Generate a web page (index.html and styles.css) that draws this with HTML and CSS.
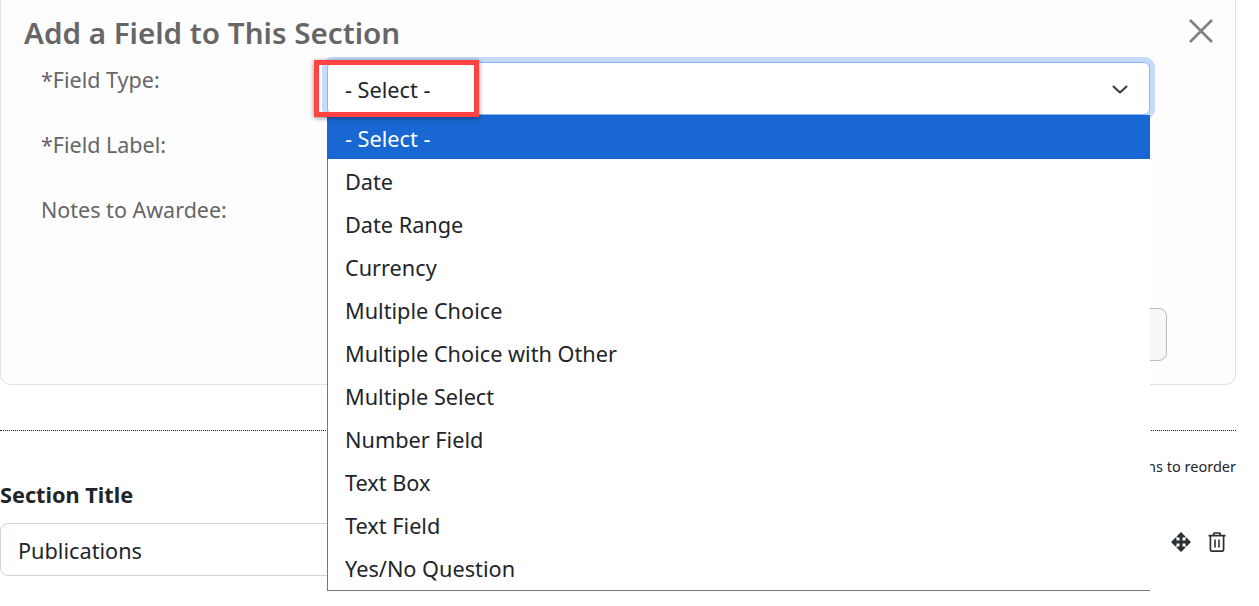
FILE: index.html
```html
<!DOCTYPE html>
<html lang="en">
<head>
    <meta charset="UTF-8">
    <meta name="viewport" content="width=device-width, initial-scale=1.0">
    <title>Add a Field</title>
    <link rel="stylesheet" href="styles.css">
</head>
<body>
    <div class="page">
        <div class="add-card">
            <div class="add-head">
                <h2>Add a Field to This Section</h2>
                <button class="close-btn" aria-label="Close">
                    <svg width="26" height="26" viewBox="0 0 26 26"><path d="M2 2 L24 24 M24 2 L2 24" stroke="#808080" stroke-width="2.6" fill="none"/></svg>
                </button>
            </div>
            <div class="field-row">
                <label>*Field Type:</label>
                <div class="select-wrap">
                    <div class="select-box">
                        <span>- Select -</span>
                        <svg width="16" height="16" viewBox="0 0 16 16"><path d="M1.5 4.5 L8 10.5 L14.5 4.5" stroke="#343a40" stroke-width="2" fill="none" stroke-linecap="round" stroke-linejoin="round"/></svg>
                    </div>
                    <ul class="select-list">
                        <li class="active">- Select -</li>
                        <li>Date</li>
                        <li>Date Range</li>
                        <li>Currency</li>
                        <li>Multiple Choice</li>
                        <li>Multiple Choice with Other</li>
                        <li>Multiple Select</li>
                        <li>Number Field</li>
                        <li>Text Box</li>
                        <li>Text Field</li>
                        <li>Yes/No Question</li>
                    </ul>
                    <div class="highlight"></div>
                </div>
            </div>
            <div class="field-row">
                <label>*Field Label:</label>
                <input class="text-input" type="text">
            </div>
            <div class="field-row">
                <label>Notes to Awardee:</label>
                <input class="text-input" type="text">
            </div>
            <div class="add-foot">
                <button class="add-btn">Add</button>
            </div>
        </div>

        <div class="section-block">
            <div class="section-left">
                <label class="section-label">Section Title</label>
                <input class="section-input" type="text" value="Publications">
            </div>
            <div class="section-right">
                <p class="hint">Use the icons to reorder</p>
                <div class="row-icons">
                    <svg width="20" height="20" viewBox="0 0 20 20"><path d="M10 3 V17 M3 10 H17" stroke="#2b3035" stroke-width="3" fill="none"/><path d="M10 0 L14.5 4.5 Q14.5 5.5 13.5 5.5 H6.5 Q5.5 5.5 5.5 4.5 Z M10 20 L14.5 15.5 Q14.5 14.5 13.5 14.5 H6.5 Q5.5 14.5 5.5 15.5 Z M0 10 L4.5 5.5 Q5.5 5.5 5.5 6.5 V13.5 Q5.5 14.5 4.5 14.5 Z M20 10 L15.5 5.5 Q14.5 5.5 14.5 6.5 V13.5 Q14.5 14.5 15.5 14.5 Z" fill="#2b3035"/></svg>
                    <svg width="18" height="20" viewBox="0 0 18 20"><path d="M0.5 3.7 H17.5 M2.4 3.7 V17.5 Q2.4 19.2 4 19.2 H14 Q15.6 19.2 15.6 17.5 V3.7 M5.2 3.7 L6.2 1 H11.8 L12.8 3.7" stroke="#2b3035" stroke-width="1.7" fill="none"/><path d="M7 7.5 V15.5 M11 7.5 V15.5" stroke="#55595d" stroke-width="2" fill="none"/></svg>
                </div>
            </div>
        </div>
    </div>
</body>
</html>
```

FILE: styles.css
```css
html, body {
    margin: 0;
    height: 100%;
    overflow: hidden;
    background-color: #fff;
}
body {
    font-family: "Noto Sans", "Open Sans", Arial, sans-serif;
    font-size: 21.7px;
    color: #212529;
}
.page {
    width: 1236px;
}
.add-card {
    box-sizing: border-box;
    height: 385px;
    padding: 0 21px 0 23px;
    background-color: #fdfdfd;
    border: 1px solid #dee2e6;
    border-top: none;
    border-radius: 0 0 10px 10px;
}
.add-head {
    display: flex;
    justify-content: space-between;
    height: 62px;
}
.add-head h2 {
    margin: 13px 0 0;
    font-size: 29.6px;
    line-height: 40px;
    font-weight: 600;
    color: #666;
}
.close-btn {
    width: 26px;
    height: 26px;
    margin-top: 18px;
    padding: 0;
    border: none;
    background: none;
}
.field-row {
    display: flex;
    height: 65px;
    padding-left: 17px;
}
.field-row label {
    width: 286px;
    padding-top: 3px;
    font-size: 21.5px;
    color: #666;
    line-height: 30px;
}
.select-wrap {
    position: relative;
    width: 823px;
}
.select-box {
    box-sizing: border-box;
    display: flex;
    justify-content: space-between;
    align-items: center;
    height: 53px;
    padding: 2px 21px 0 17px;
    background-color: #fff;
    border: 1px solid #86b7fe;
    border-radius: 6px;
    box-shadow: 0 0 0 5px #c5dbfd;
}
.select-list {
    position: absolute;
    top: 53px;
    left: 0;
    right: 0;
    z-index: 2;
    box-sizing: border-box;
    height: 476px;
    margin: 0;
    padding: 0;
    list-style: none;
    background-color: #fff;
    border-left: 1px solid #767676;
    border-bottom: 1px solid #767676;
}
.select-list li {
    height: 43px;
    padding-left: 17px;
    line-height: 47px;
}
.select-list li.active {
    margin-left: -1px;
    padding-left: 18px;
    background-color: #1967d2;
    box-shadow: 0 1px 0 #1967d2;
    color: #fff;
}
.highlight {
    position: absolute;
    top: -2px;
    left: -13px;
    z-index: 3;
    box-sizing: border-box;
    width: 165px;
    height: 57px;
    border: 5px solid #ff4242;
    box-shadow: 0 1px 5px rgba(0, 0, 0, 0.45);
}
.text-input {
    box-sizing: border-box;
    width: 823px;
    height: 53px;
    border: 1px solid #ced4da;
    border-radius: 6px;
}
.add-foot {
    display: flex;
    justify-content: flex-end;
    margin-top: 51px;
    padding-right: 47px;
}
.add-btn {
    width: 200px;
    height: 53px;
    background-color: #f7f7f7;
    border: 1px solid #bbb;
    border-radius: 8px;
    font-size: 20px;
}
.section-block {
    position: relative;
    display: flex;
    justify-content: space-between;
    height: 170px;
    margin-top: 45px;
    border-top: 1px dotted #222;
}
.section-label {
    display: block;
    margin-top: 49px;
    font-weight: 700;
    line-height: 30px;
}
.section-input {
    box-sizing: border-box;
    display: block;
    width: 900px;
    height: 53px;
    margin-top: 13px;
    padding: 2px 17px 0;
    border: 1px solid #ced4da;
    border-radius: 8px;
    font-family: inherit;
    font-size: 21.7px;
    color: #212529;
}
.section-right {
    display: flex;
    flex-direction: column;
    align-items: flex-end;
}
.hint {
    margin: 24px 0 0;
    font-size: 14.5px;
    line-height: 22px;
    white-space: nowrap;
}
.row-icons {
    display: flex;
    align-items: center;
    gap: 17px;
    margin-top: 55px;
    padding-right: 10px;
}
```
